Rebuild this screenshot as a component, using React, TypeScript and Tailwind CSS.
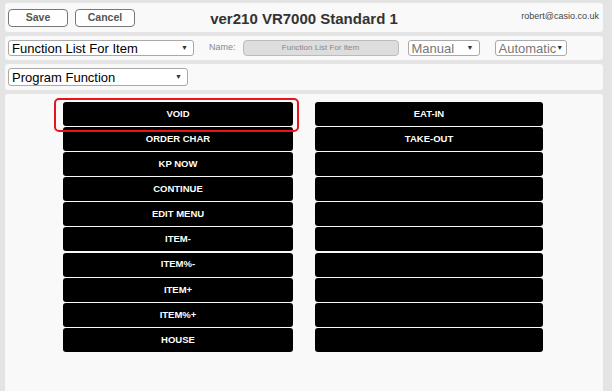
const left = ["VOID", "ORDER CHAR", "KP NOW", "CONTINUE", "EDIT MENU", "ITEM-", "ITEM%-", "ITEM+", "ITEM%+", "HOUSE"]
const right = ["EAT-IN", "TAKE-OUT", "", "", "", "", "", "", "", ""]

function FakeSelect({ label, w, muted }: { label: string; w: string; muted?: boolean }) {
  return (
    <div
      className={`${w} h-[16px] flex items-center justify-between rounded-[3px] border border-[#a9a9a9] bg-white pl-[3px] pr-[5px] ${muted ? "text-[#777] text-[13px]" : "text-black text-[13px]"}`}
    >
      <span className="leading-none whitespace-nowrap">{label}</span>
      <span className="text-[7px] text-[#333]">▼</span>
    </div>
  )
}

function FnButton({ label }: { label: string }) {
  return (
    <div className="h-[24px] rounded-[3px] bg-black flex items-center justify-center text-white text-[9.5px] font-bold">
      {label}
    </div>
  )
}

export default function App() {
  return (
    <div className="w-[612px] h-[391px] overflow-hidden bg-[#e4e4e4] flex flex-col gap-[4px] pl-[5px] pr-[9px] pt-[3px]" style={{ fontFamily: '"Liberation Sans", Arial, sans-serif' }}>
      <div className="h-[29px] shrink-0 rounded-[3px] bg-[#f9f9f9] relative flex items-center px-[3px] gap-[7px]">
        <div className="w-[60px] h-[18px] rounded-[4px] border border-[#777] bg-white flex items-center justify-center text-[10.5px] font-bold text-[#555]">Save</div>
        <div className="w-[60px] h-[18px] rounded-[4px] border border-[#777] bg-white flex items-center justify-center text-[10.5px] font-bold text-[#555]">Cancel</div>
        <div className="absolute left-0 right-0 top-[5px] text-center text-[15px] font-bold text-[#333] pointer-events-none">ver210 VR7000 Standard 1</div>
        <div className="absolute right-[4px] top-[7px] text-[9px] text-[#444]">robert@casio.co.uk</div>
      </div>
      <div className="h-[24px] shrink-0 rounded-[3px] bg-[#f9f9f9] flex items-center px-[3px]">
        <FakeSelect label="Function List For Item" w="w-[186px]" />
        <span className="ml-[15px] text-[9px] text-[#888]">Name:</span>
        <div className="ml-[7px] w-[156px] h-[16px] rounded-[4px] border border-[#bbb] bg-[#ddd] flex items-center justify-center text-[8px] text-[#888]">Function List For Item</div>
        <div className="ml-[9px]"><FakeSelect label="Manual" w="w-[72px]" muted /></div>
        <div className="ml-[15px]"><FakeSelect label="Automatic" w="w-[72px] !pr-[4px]" muted /></div>
      </div>
      <div className="h-[26px] shrink-0 rounded-[3px] bg-[#f9f9f9] flex items-center px-[3px]">
        <FakeSelect label="Program Function" w="w-[180px] !h-[18px]" />
      </div>
      <div className="flex-1 rounded-t-[3px] bg-[#f9f9f9] pt-[8px] pl-[58px]">
        <div className="relative flex gap-[22px]">
          <div className="absolute left-[-9px] top-[-4px] w-[245px] h-[34px] rounded-[5px] border-2 border-[#e8141b] pointer-events-none" />
          <div className="w-[230px] flex flex-col gap-[1.1px]">
            {left.map((l, i) => <FnButton key={i} label={l} />)}
          </div>
          <div className="w-[228px] flex flex-col gap-[1.1px]">
            {right.map((l, i) => <FnButton key={i} label={l} />)}
          </div>
        </div>
      </div>
    </div>
  )
}
